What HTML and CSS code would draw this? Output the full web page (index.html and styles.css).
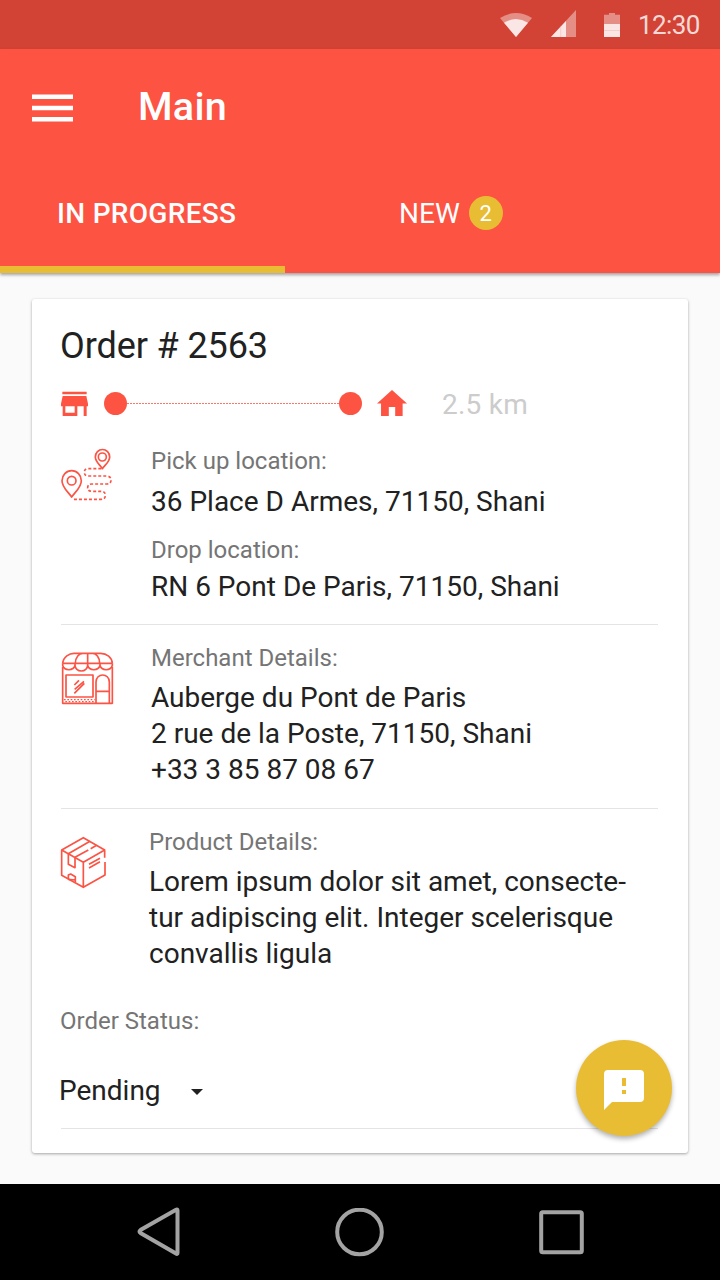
FILE: index.html
```html
<!DOCTYPE html>
<html lang="en">
<head>
<meta charset="utf-8">
<title>Main</title>
<link rel="stylesheet" href="styles.css">
</head>
<body>
<div class="screen">
  <div class="status-bar">
    <svg class="wifi" viewBox="0 0 96 72"><path class="faint" d="M0 15Q48-15 96 15L48 72Z"/><path class="solid" d="M12 29Q48 7 84 29L48 72Z"/></svg>
    <svg class="signal" viewBox="0 0 75 81"><path class="faint" d="M75 0V81H0Z"/><path class="solid" d="M45 33V81H0Z"/><path class="seam" d="M29 50V81"/></svg>
    <svg class="battery" viewBox="0 0 48 72"><path class="faint" d="M0 5H15V0H33V5H48V33H0Z"/><path class="solid" d="M0 33H48V72H0Z"/><path class="seam" d="M0 52.500H48"/></svg>
    <span class="clock">12:30</span>
  </div>
  <header class="app-header">
    <div class="toolbar">
      <svg class="menu" viewBox="0 0 41 28"><path d="M0 .5H41V5H0ZM0 11.800H41V16.300H0ZM0 23H41V27.500H0Z"/></svg>
      <h1 class="title">Main</h1>
    </div>
    <nav class="tabs">
      <div class="tab tab-active"><span class="tab-label-active">IN PROGRESS</span></div>
      <div class="tab tab-new"><span class="tab-label">NEW</span><span class="count">2</span></div>
    </nav>
  </header>
  <main class="content">
    <article class="card">
      <h2 class="order">Order # 2563</h2>
      <div class="route">
        <svg class="shop" viewBox="0 0 81 75"><path d="M4 2H77V10H4ZM5 15H76L81 38V46H77V75H68V46H49V75H5V46H0V38ZM13 46V65H41V46Z"/></svg>
        <span class="dot"></span><span class="line"></span><span class="dot dot-end"></span>
        <svg class="home" viewBox="0 0 89 77"><path d="M44.500 0L89 40H76V77H54V50H35V77H12V40H0Z"/></svg>
        <span class="distance">2.5 km</span>
      </div>
      <section class="section section-places">
        <svg class="icon" viewBox="30 24 162 162">
          <path d="M65 171C54 155 36 142 36 122A29 30 0 0 1 94 122C94 142 76 155 65 171Z"/>
          <circle cx="65" cy="122" r="13"/>
          <path d="M157 86C150 74 136 66 136 51A21 22 0 0 1 179 51C179 66 165 74 157 86Z"/>
          <circle cx="157" cy="51" r="12"/>
          <path class="dashed" d="M154 86H115Q103 86 103 97Q103 108 116 108H170Q183 109 183 120Q183 132 170 132H126Q113 132 113 143Q113 154 126 154H154Q166 155 166 166Q166 178 153 178H70"/>
        </svg>
        <div class="details">
          <p class="label">Pick up location:</p>
          <p class="value value-pick">36 Place D Armes, 71150, Shani</p>
          <p class="label label-drop">Drop location:</p>
          <p class="value value-drop">RN 6 Pont De Paris, 71150, Shani</p>
        </div>
      </section>
      <section class="section section-merchant">
        <svg class="icon" viewBox="30 33 162 162">
          <path d="M38 70C40 50 58 40 72 40H152C170 40 186 52 187 70M38 70H187M113 40V70M76 70C76 52 88 40 98 40M149 70C149 52 138 40 128 40"/>
          <path d="M38 70V76A19 17 0 0 0 75 76A19 17 0 0 0 113 76A19 17 0 0 0 150 76A19 17 0 0 0 187 76V70M75 70V76M113 70V76M150 70V76"/>
          <path d="M38 80V190H187V80M48 105H129V171H48ZM138 189V126C138 98 178 98 178 126V189M138 154H178"/>
          <path d="M73 135L87 121M74 148L102 124M73 160L103 130"/>
          <path class="bricks" d="M42 179H134M46 185H134"/>
        </svg>
        <div class="details">
          <p class="label">Merchant Details:</p>
          <p class="value">Auberge du Pont de Paris<br>2 rue de la Poste, 71150, Shani<br>+33 3 85 87 08 67</p>
        </div>
      </section>
      <section class="section section-product">
        <svg class="icon" viewBox="30 33 162 162">
          <path d="M164 98V75L100 38L35 75V151L100 187L165 150V111M35 75L100 112L164 75M100 112V187"/>
          <path d="M55 86L120 49M75 97L115 75M122 71L140 61M55 86V118L75 128V97M55 163V150L62 147L76 155V171M55 163L76 165M117 118L150 100M117 129L150 110"/>
        </svg>
        <div class="details">
          <p class="label">Product Details:</p>
          <p class="value">Lorem ipsum dolor sit amet, consecte-<br>tur adipiscing elit. Integer scelerisque<br>convallis ligula</p>
        </div>
      </section>
      <section class="status">
        <p class="label">Order Status:</p>
        <div class="select"><span>Pending</span><svg class="caret" viewBox="0 0 12 6"><path d="M0 0H12L6 6Z"/></svg></div>
      </section>
    </article>
    <div class="fab"><svg viewBox="0 0 40 40"><path fill-rule="evenodd" d="M4 0H36Q40 0 40 4V28Q40 32 36 32H8L0 40V4Q0 0 4 0ZM18 8V16H22V8ZM18 20V24H22V20Z"/></svg></div>
  </main>
  <footer class="nav-bar">
    <svg class="back" viewBox="0 0 44 50"><path d="M40.500 3.500Q40.500 2 39 2.700L3.500 23Q1.500 24.500 3.500 26L39 46.500Q40.500 47.500 40.500 46Z"/></svg>
    <svg class="circle" viewBox="0 0 49 49"><circle cx="24.500" cy="24" r="22.300"/></svg>
    <svg class="square" viewBox="0 0 45 45"><rect x="2.200" y="2.200" width="40.600" height="40" rx="1.500"/></svg>
  </footer>
</div>
</body>
</html>
```
FILE: styles.css
```css
* { box-sizing: border-box; margin: 0; padding: 0; }
body { font-family: Roboto, "Liberation Sans", sans-serif; color: #212121; }
svg { display: block; flex: none; }
.screen { width: 720px; height: 1280px; display: flex; flex-direction: column; background: #fafafa; overflow: hidden; }

.status-bar { height: 49px; flex: none; background: #d24335; display: flex; padding-left: 500px; }
.faint { fill: #e58e86; }
.solid { fill: #fae6e4; }
.seam { stroke: #f0c4c0; stroke-width: 2; }
.wifi { width: 32px; height: 24px; margin-top: 13px; }
.signal { width: 25px; height: 27px; margin: 10px 0 0 19px; }
.battery { width: 16px; height: 24px; margin: 13px 0 0 28px; }
.clock { margin-left: 18px; font-size: 26px; line-height: 50px; letter-spacing: -0.6px; color: #f6d9d6; }

.app-header { height: 224px; flex: none; background: #fd5342; color: #fff; box-shadow: 0 2px 3px rgba(0, 0, 0, .35); display: flex; flex-direction: column; z-index: 1; }
.toolbar { height: 112px; display: flex; align-items: center; padding: 3px 0 0 32px; }
.menu { width: 41px; height: 28px; margin-top: 3px; fill: #fff; }
.title { margin-left: 65px; font-size: 39.500px; font-weight: 500; line-height: 48px; letter-spacing: .3px; }
.tabs { height: 112px; display: flex; }
.tab { height: 112px; display: flex; align-items: center; padding-bottom: 7px; font-size: 28px; }
.tab-active { width: 285px; border-bottom: 7px solid #e9bd33; padding: 0 0 0 57px; }
.tab-label-active { font-weight: 500; letter-spacing: .3px; white-space: nowrap; }
.tab-new { padding-left: 114px; }
.count { width: 34px; height: 34px; margin: 0 0 1px 9px; border-radius: 50%; background: #e9bd33; font-size: 22px; line-height: 35px; text-align: center; }

.content { height: 911px; flex: none; padding: 26px 32px 0; position: relative; }
.card { height: 854px; padding: 25px 30px 0 28px; background: #fff; border-radius: 3px; box-shadow: 0 1px 3px rgba(0, 0, 0, .35); display: flex; flex-direction: column; }
.order { font-size: 36px; font-weight: 400; line-height: 44px; letter-spacing: -.1px; }
.route { height: 71px; display: flex; align-items: center; }
.shop { width: 27px; height: 25px; margin-left: 1px; fill: #fd5342; }
.dot { width: 23px; height: 23px; margin-left: 16px; border-radius: 50%; background: #fd5342; flex: none; }
.line { width: 212px; height: 1px; background: repeating-linear-gradient(90deg, #fd5342 0 2px, #fff 2px 3px); opacity: .8; }
.dot-end { margin: 0 0 1px; }
.home { width: 30px; height: 26px; margin: 0 0 1px 15px; fill: #fd5342; }
.distance { margin-left: 35px; font-size: 28px; letter-spacing: .25px; color: #ccc; padding-top: 2px; }

.section { display: flex; gap: 37px; padding-top: 19px; height: 184px; }
.section-places { height: 186px; padding-top: 8px; }
.section-places, .section-merchant { background: linear-gradient(#e4e4e4, #e4e4e4) 1px 100% / 597px 1px no-repeat; }
.icon { width: 54px; height: 54px; margin-top: 8px; fill: none; stroke: #fb5344; stroke-width: 5; stroke-linejoin: round; }
.section-places .icon { margin-top: 1px; }
.section-merchant .icon { margin-top: 7px; }
.dashed { stroke-dasharray: 9 6; }
.bricks { stroke-dasharray: 5 5; stroke-width: 4; }
.details { white-space: nowrap; }
.label { font-size: 24px; line-height: 28px; color: #757575; }
.value { font-size: 28px; line-height: 36px; margin-top: 8px; }
.value-pick { margin-top: 9px; }
.label-drop { margin-top: 16px; }
.value-drop { margin-top: 5px; }
.section-product { gap: 35px; height: 198px; }
.status { height: 122px; background: linear-gradient(#e4e4e4, #e4e4e4) 1px 100% / 597px 1px no-repeat; }
.select { display: flex; align-items: center; height: 36px; margin: 37px 0 0 -1px; font-size: 28px; }
.caret { width: 12px; height: 6px; margin: 4px 0 0 30px; fill: #212121; }

.fab { position: absolute; left: 576px; top: 767px; width: 96px; height: 96px; border-radius: 50%; background: #e9bd33; box-shadow: 0 3px 5px rgba(0, 0, 0, .3); display: flex; justify-content: center; padding-top: 30px; }
.fab svg { width: 40px; height: 40px; fill: #fff; }

.nav-bar { height: 96px; flex: none; background: #000; display: flex; align-items: center; padding-left: 137px; }
.nav-bar svg { fill: none; stroke: #a3a3a3; stroke-width: 4; }
.back { width: 44px; height: 50px; }
.circle { width: 49px; height: 49px; margin-left: 154px; }
.square { width: 45px; height: 45px; margin-left: 155px; }
```
